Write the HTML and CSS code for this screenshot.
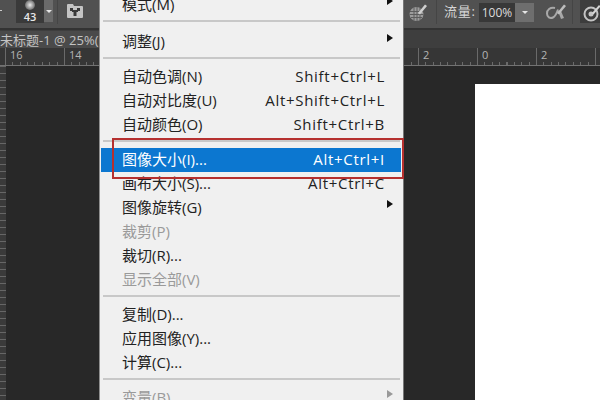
FILE: index.html
```html
<!DOCTYPE html>
<html lang="zh-CN">
<head>
<meta charset="utf-8">
<title>图像大小</title>
<link rel="stylesheet" href="styles.css">
</head>
<body>
<div class="app">
  <header class="options">
    <span class="stub"></span>
    <div class="brush"><span class="dot"></span><span class="brush-size">43</span></div>
    <div class="brush-drop"><span class="caret-w"></span></div>
    <div class="divider d1"></div>
    <svg class="tool-icon panel" viewBox="0 0 18 16"><path d="M1 2a1 1 0 0 1 1-1h5l1 2h8a1 1 0 0 1 1 1v10a1 1 0 0 1-1 1H2a1 1 0 0 1-1-1z" fill="#c4c4c4"/><path d="M4 5h3v3H4zM11 5h3v3h-3zM6 7h6v2H6zM7.500 9h3v4h-3z" fill="#383838"/></svg>
    <div class="spacer"></div>
    <svg class="tool-icon air" viewBox="0 0 20 20"><circle cx="8.500" cy="12" r="7" fill="#9c9c9c"/><path d="M2 9.500h13M1.500 12.500h14M3 15.500h11M6 5.500v13M9 5v14M12 6v12" stroke="#5c5c5c" stroke-width="1"/><path d="M10 11l7-8.500 2 1.500-7 8.500z" fill="#cfcfcf"/></svg>
    <div class="divider d2"></div>
    <span class="flow-label">流量:</span>
    <div class="flow-input">100%</div>
    <div class="flow-drop"><span class="caret-w"></span></div>
    <svg class="tool-icon alpha" viewBox="0 0 22 20"><path d="M10 6C5 5 2 8 2 11.500S5 17 8 15.500c3-1.500 4-5 5-8" fill="none" stroke="#a8a8a8" stroke-width="2"/><path d="M13 9l3 8 3-1-3-7z" fill="#a8a8a8"/><path d="M12 11l7-8.500 2 1.500-7 8.500z" fill="#bdbdbd"/></svg>
    <div class="divider d3"></div>
    <div class="target"><svg class="tool-icon" viewBox="0 0 20 20"><circle cx="9" cy="12" r="6.500" fill="none" stroke="#c4c4c4" stroke-width="2"/><circle cx="9" cy="12" r="2.500" fill="#c4c4c4"/><path d="M10 11l7-8 1.500 1.500-7 8z" fill="#d5d5d5"/></svg></div>
  </header>
  <div class="tabbar"><span class="tab">未标题-1 @ 25%(RGB/8)</span></div>
  <div class="ruler">
    <span class="mark">16</span><span class="mark">14</span><span class="mark">12</span><span class="mark">10</span>
    <span class="mark">8</span><span class="mark">6</span><span class="mark">4</span><span class="mark">2</span>
    <span class="mark">0</span><span class="mark">2</span><span class="mark">4</span>
  </div>
  <main class="workspace">
    <div class="vruler"></div>
    <div class="document"></div>
  </main>

  <nav class="menu">
    <div class="item"><span>模式(M)</span><i class="arrow"></i></div>
    <div class="sep sep-wide"></div>
    <div class="item"><span>调整(J)</span><i class="arrow"></i></div>
    <div class="sep"></div>
    <div class="item"><span>自动色调(N)</span><kbd>Shift+Ctrl+L</kbd></div>
    <div class="item"><span>自动对比度(U)</span><kbd>Alt+Shift+Ctrl+L</kbd></div>
    <div class="item"><span>自动颜色(O)</span><kbd>Shift+Ctrl+B</kbd></div>
    <div class="sep"></div>
    <div class="item active"><span>图像大小(I)...</span><kbd>Alt+Ctrl+I</kbd></div>
    <div class="item"><span>画布大小(S)...</span><kbd>Alt+Ctrl+C</kbd></div>
    <div class="item"><span>图像旋转(G)</span><i class="arrow"></i></div>
    <div class="item off"><span>裁剪(P)</span></div>
    <div class="item"><span>裁切(R)...</span></div>
    <div class="item off"><span>显示全部(V)</span></div>
    <div class="sep"></div>
    <div class="item"><span>复制(D)...</span></div>
    <div class="item"><span>应用图像(Y)...</span></div>
    <div class="item"><span>计算(C)...</span></div>
    <div class="sep"></div>
    <div class="item off"><span>变量(B)</span><i class="arrow arrow-off"></i></div>
  </nav>
  <div class="callout"></div>
</div>
</body>
</html>
```

FILE: styles.css
```css
* { box-sizing: border-box; }
html, body { margin: 0; padding: 0; }
body { width: 600px; height: 400px; overflow: hidden; background: #282828; }

.app {
  position: relative;
  width: 600px;
  height: 400px;
  overflow: hidden;
  display: flex;
  flex-direction: column;
  font-family: "Open Sans", "Noto Sans CJK SC", sans-serif;
}

.options {
  height: 30px;
  flex: none;
  display: flex;
  align-items: flex-start;
  background: #515151;
  border-bottom: 2px solid #333;
}
.stub { width: 2px; height: 1px; margin: 10px 14px 0 0; background: #ccc; flex: none; }
.brush {
  width: 28px;
  height: 23px;
  background: #3a3a3a;
  display: flex;
  flex-direction: column;
  align-items: center;
  flex: none;
}
.dot {
  width: 10px;
  height: 10px;
  margin-top: 0;
  border-radius: 50%;
  background: radial-gradient(circle, #ececec 0, #8a8a8a 55%, #3a3a3a 100%);
}
.brush-size { font-size: 11px; line-height: 11px; margin-top: 1px; color: #e8e8e8; font-weight: 600; }
.brush-drop {
  width: 9px;
  height: 22px;
  background: #6b6b6b;
  display: flex;
  justify-content: center;
  padding-top: 10px;
  flex: none;
}
.caret-w {
  width: 0;
  height: 0;
  border: 3px solid transparent;
  border-top: 3px solid #e6e6e6;
  border-bottom: 0;
}
.divider { width: 1px; height: 24px; background: #454545; flex: none; }
.d1 { margin-left: 4px; }
.tool-icon { width: 20px; height: 20px; flex: none; display: block; }
.panel { width: 18px; height: 16px; margin: 3px 0 0 8px; }
.spacer { flex: 1; }
.air { margin: 2px 8px 0 0; }
.d2 { margin-right: 7px; }
.flow-label { width: 35px; font-size: 13px; line-height: 22px; letter-spacing: 0.8px; color: #d6d6d6; flex: none; white-space: nowrap; }
.flow-input {
  width: 36px;
  height: 19px;
  margin-top: 3px;
  background: #383838;
  color: #dcdcdc;
  font-size: 12px;
  line-height: 19px;
  text-align: center;
  flex: none;
}
.flow-drop {
  width: 19px;
  height: 19px;
  margin-top: 3px;
  background: #6e6e6e;
  display: flex;
  justify-content: center;
  padding-top: 8px;
  flex: none;
}
.alpha { width: 22px; margin: 2px 5px 0 11px; }
.d3 { margin-right: 7px; }
.target { width: 24px; height: 23px; background: #3d3d3d; padding: 2px; flex: none; margin-right: -4px; }

.tabbar {
  height: 18px;
  flex: none;
  background: #3e3e3e;
  font-size: 13px;
  line-height: 19px;
  color: #c4c4c4;
}
.tab { display: block; width: 100px; height: 17px; margin-top: 1px; background: #4a4a4a; overflow: hidden; white-space: nowrap; line-height: 18px; }

.ruler {
  height: 18px;
  flex: none;
  display: flex;
  padding-left: 5px;
  background-color: #363636;
  background-image: repeating-linear-gradient(90deg, #6a6a6a 0 1px, transparent 1px 7.375px);
  background-size: 100% 3px;
  background-repeat: no-repeat;
  background-position: 5px 14px;
  border-bottom: 1px solid #727272;
  overflow: hidden;
}
.mark {
  flex: 0 0 59px;
  height: 17px;
  border-left: 1px solid #6a6a6a;
  padding-left: 4px;
  font-size: 11px;
  line-height: 14px;
  color: #b4b4b4;
}

.workspace { flex: 1; position: relative; display: flex; background: #282828; }
.vruler {
  width: 6px;
  background-color: #3a3a3a;
  background-image: repeating-linear-gradient(180deg, #666 0 1px, transparent 1px 7px);
}
.document { position: absolute; left: 475px; top: 18px; right: 0; bottom: 0; background: #fff; }

.menu {
  position: absolute;
  left: 99px;
  top: -7px;
  width: 305px;
  padding: 0 2px 0 1px;
  background: #f0f0f0;
  border-left: 1px solid #8f8f8f;
  border-right: 1px solid #777;
  font-size: 15px;
  color: #222;
}
.item {
  height: 24px;
  display: flex;
  align-items: center;
  justify-content: space-between;
  padding: 0 16px 1px 21px;
  line-height: 23px;
  white-space: nowrap;
  position: relative;
}
.item kbd { font: inherit; letter-spacing: 0.7px; }
.active { background: #0c77d0; color: #fff; }
.off { color: #9a9a9a; }
.sep { height: 11px; padding-top: 3px; margin: 0 1px 0 2px; }
.sep::before { content: ""; display: block; height: 2px; background: #c8c8c8; }
.sep-wide { height: 13px; }
.arrow {
  position: absolute;
  right: 8px;
  top: 4px;
  width: 0;
  height: 0;
  border: 4.500px solid transparent;
  border-left: 6px solid #111;
  border-right: 0;
}
.arrow-off { border-left-color: #999; }

.callout {
  position: absolute;
  left: 112px;
  top: 138px;
  width: 292px;
  height: 41px;
  border: 2px solid #b5302f;
}
```
